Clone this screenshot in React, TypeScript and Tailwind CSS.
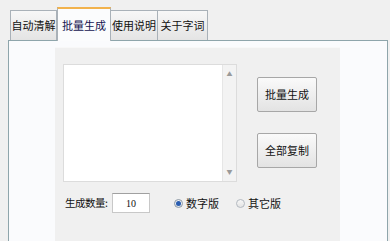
export default function App() {
  const font = { fontFamily: '"Noto Sans CJK SC", "Microsoft YaHei", sans-serif' };

  return (
    <div
      className="w-[390px] h-[241px] bg-[#f0f0f0] overflow-hidden flex flex-col text-[11px] text-[#111]"
      style={font}
    >
      {/* Tab strip */}
      <div className="h-[40px] pl-[10px] flex items-end shrink-0">
        <div className="w-[47px] h-[30px] flex items-center justify-center border border-[#a9b1b8] border-b-0 bg-gradient-to-b from-[#f7f7f7] to-[#e4e4e4]">
          自动清解
        </div>
        <div className="relative z-10 -mb-px w-[54px] h-[34px] flex items-center justify-center border border-[#a9b1b8] border-b-0 border-t-2 border-t-[#f2b24c] bg-[#fbfcfd] text-[#141450]">
          批量生成
        </div>
        <div className="w-[47px] h-[30px] flex items-center justify-center border border-[#a9b1b8] border-b-0 border-l-0 bg-gradient-to-b from-[#f7f7f7] to-[#e4e4e4]">
          使用说明
        </div>
        <div className="w-[50px] h-[30px] flex items-center justify-center border border-[#a9b1b8] border-b-0 border-l-0 bg-gradient-to-b from-[#f7f7f7] to-[#e4e4e4]">
          关于字词
        </div>
      </div>

      {/* Panel */}
      <div className="ml-[8px] w-[380px] flex-1 border border-b-0 border-[#8ea5ab] bg-[#fafbfd] flex flex-col">
        <div className="ml-[46px] mt-[6px] w-[285px] flex-1 bg-[#f0f0f0] border-t border-[#f8f8f8] flex flex-col pt-[16px] pl-[8px]">
          {/* Textarea + buttons */}
          <div className="flex">
            <div className="w-[174px] h-[118px] bg-white border border-[#dcdcdc] flex justify-end">
              <div className="w-[14px] h-full bg-[#f3f3f3] border-l border-[#e6e6e6] flex flex-col items-center justify-between py-[6px] text-[6px] text-[#9a9a9a] leading-none">
                <span>▲</span>
                <span>▼</span>
              </div>
            </div>
            <div className="ml-[20px] pt-[13px] flex flex-col gap-[21px]">
              <button className="w-[60px] h-[35px] rounded-[2px] border border-[#a7a7a7] bg-gradient-to-b from-[#fafafa] to-[#e3e3e3] text-[11px] text-[#111]">
                批量生成
              </button>
              <button className="w-[60px] h-[35px] rounded-[2px] border border-[#a7a7a7] bg-gradient-to-b from-[#fafafa] to-[#e3e3e3] text-[11px] text-[#111]">
                全部复制
              </button>
            </div>
          </div>

          {/* Count + radio row */}
          <div className="mt-[11px] flex items-center h-[20px]">
            <span className="ml-[2px] w-[47px] whitespace-nowrap text-[10.5px] tracking-[-0.5px]">生成数量:</span>
            <div className="w-[38px] h-[20px] bg-white border border-[#c8c8c8] border-t-[#a0a0a0] flex items-center justify-center text-[10px]" style={{ fontFamily: '"Liberation Serif", serif' }}>
              10
            </div>
            <div className="ml-[24px] flex items-center gap-[3px]">
              <span className="w-[9px] h-[9px] rounded-full border border-[#8c98a4] bg-gradient-to-b from-[#f2f4f7] to-[#dfe3e8] flex items-center justify-center">
                <span className="w-[5px] h-[5px] rounded-full bg-[#2a5db0]" />
              </span>
              <span className="w-[33px] whitespace-nowrap">数字版</span>
            </div>
            <div className="ml-[17px] flex items-center gap-[3px]">
              <span className="w-[9px] h-[9px] rounded-full border border-[#b3b9c0] bg-gradient-to-b from-[#f7f7f7] to-[#e4e4e4]" />
              <span>其它版</span>
            </div>
          </div>
        </div>
      </div>
    </div>
  );
}
